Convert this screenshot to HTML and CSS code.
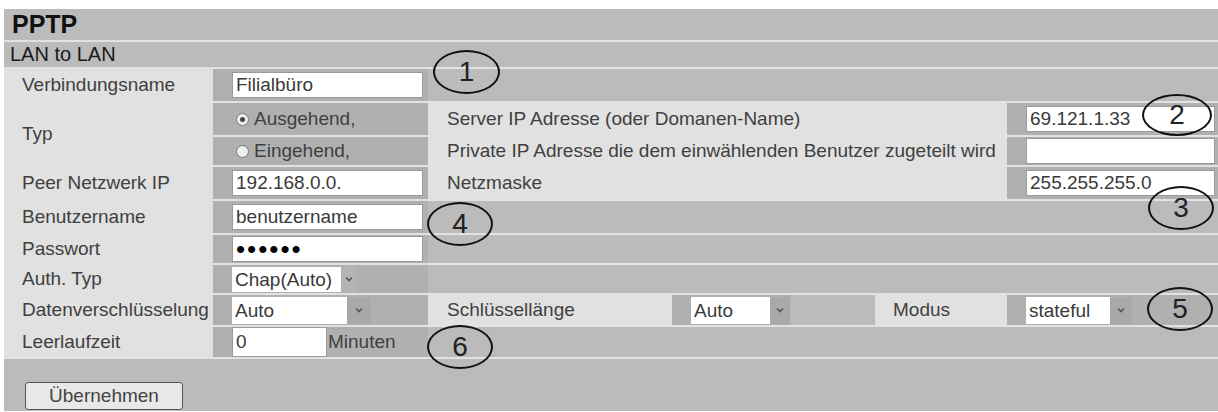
FILE: index.html
```html
<!DOCTYPE html>
<html lang="de">
  <head>
    <meta charset="UTF-8" />
    <meta name="viewport" content="width=device-width, initial-scale=1.0" />
    <title>PPTP LAN to LAN</title>
    <link rel="stylesheet" href="styles.css">
  </head>
  <body>
    <div class="page">
      <div class="panel">
        <div class="title">PPTP</div>
        <div class="subtitle">LAN to LAN</div>

        <div class="row tall">
          <div class="cell lbl col-a">Verbindungsname</div>
          <div class="cell val col-b"><input type="text" class="field" value="Filialbüro" /></div>
          <div class="cell rest"></div>
        </div>

        <div class="row group">
          <div class="cell lbl col-a">Typ</div>
          <div class="sub">
            <div class="subrow tall">
              <div class="cell val col-b">
                <label class="radio"><input type="radio" name="typ" checked />Ausgehend,</label>
              </div>
              <div class="cell lbl col-c">Server IP Adresse (oder Domanen-Name)</div>
              <div class="cell val col-d"><input type="text" class="field" value="69.121.1.33" /></div>
            </div>
            <div class="subrow short">
              <div class="cell val col-b">
                <label class="radio"><input type="radio" name="typ" />Eingehend,</label>
              </div>
              <div class="cell lbl col-c">Private IP Adresse die dem einwählenden Benutzer zugeteilt wird</div>
              <div class="cell val col-d"><input type="text" class="field" value="" /></div>
            </div>
          </div>
        </div>

        <div class="row tall">
          <div class="cell lbl col-a">Peer Netzwerk IP</div>
          <div class="cell val col-b"><input type="text" class="field" value="192.168.0.0." /></div>
          <div class="cell lbl col-c">Netzmaske</div>
          <div class="cell val col-d"><input type="text" class="field" value="255.255.255.0" /></div>
        </div>

        <div class="row tall">
          <div class="cell lbl col-a">Benutzername</div>
          <div class="cell val col-b"><input type="text" class="field" value="benutzername" /></div>
          <div class="cell rest"></div>
        </div>

        <div class="row short">
          <div class="cell lbl col-a">Passwort</div>
          <div class="cell val col-b"><input type="password" class="field pw" value="geheim" /></div>
          <div class="cell rest"></div>
        </div>

        <div class="row short">
          <div class="cell lbl col-a">Auth. Typ</div>
          <div class="cell val col-b">
            <span class="select sel-auth">
              <select><option>Chap(Auto)</option></select>
              <span class="arrow"><svg width="8" height="6" viewBox="0 0 8 6"><path d="M1 1.5 L4 4.5 L7 1.5" fill="none" stroke="#555" stroke-width="1.6"/></svg></span>
            </span>
          </div>
          <div class="cell rest"></div>
        </div>

        <div class="row">
          <div class="cell lbl col-a">Datenverschlüsselung</div>
          <div class="cell val col-b">
            <span class="select sel-data">
              <select><option>Auto</option></select>
              <span class="arrow"><svg width="8" height="6" viewBox="0 0 8 6"><path d="M1 1.5 L4 4.5 L7 1.5" fill="none" stroke="#555" stroke-width="1.6"/></svg></span>
            </span>
          </div>
          <div class="cell lbl col-key">Schlüssellänge</div>
          <div class="cell val col-keyval">
            <span class="select sel-key">
              <select><option>Auto</option></select>
              <span class="arrow"><svg width="8" height="6" viewBox="0 0 8 6"><path d="M1 1.5 L4 4.5 L7 1.5" fill="none" stroke="#555" stroke-width="1.6"/></svg></span>
            </span>
          </div>
          <div class="cell col-gap"></div>
          <div class="cell lbl col-mode">Modus</div>
          <div class="cell val col-d">
            <span class="select sel-mode">
              <select><option>stateful</option></select>
              <span class="arrow"><svg width="8" height="6" viewBox="0 0 8 6"><path d="M1 1.5 L4 4.5 L7 1.5" fill="none" stroke="#555" stroke-width="1.6"/></svg></span>
            </span>
          </div>
        </div>

        <div class="row">
          <div class="cell lbl col-a">Leerlaufzeit</div>
          <div class="cell val col-b"><input type="text" class="field idle" value="0" /><span class="unit">Minuten</span></div>
          <div class="cell rest"></div>
        </div>

        <div class="actions">
          <button type="button">Übernehmen</button>
        </div>
      </div>

      <!-- callout markers -->
      <div class="mark m1">1</div>
      <div class="mark m2">2</div>
      <div class="mark m3">3</div>
      <div class="mark m4">4</div>
      <div class="mark m5">5</div>
      <div class="mark m6">6</div>
    </div>
  </body>
</html>
```

FILE: styles.css
```css
body {
  background-color: #fff;
  color: #404040;
  font-family: "Liberation Sans", Arial, sans-serif;
  font-size: 19px;
  margin: 0;
  overflow: hidden;
}
.page {
  padding: 9px 0 0 4px;
  position: relative;
}
.panel {
  background-color: #bbbbbb;
  width: 1214px;
}
.title {
  border-bottom: 2px solid #e2e2e2;
  color: #111;
  font-size: 25px;
  font-weight: bold;
  height: 31px;
  line-height: 31px;
  padding-left: 8px;
}
.subtitle {
  border-bottom: 2px solid #e2e2e2;
  color: #1a1a1a;
  font-size: 20px;
  height: 25px;
  line-height: 25px;
  padding-left: 6px;
}
.row {
  border-bottom: 2px solid #e2e2e2;
  display: flex;
  height: 30px;
}
.row.tall,
.subrow.tall {
  height: 32px;
}
.row.short,
.subrow.short {
  height: 28px;
}
.row.group {
  height: 62px;
}
.sub {
  display: flex;
  flex-direction: column;
}
.subrow {
  display: flex;
}
.subrow.tall {
  border-bottom: 2px solid #e2e2e2;
}
.cell {
  align-items: center;
  box-sizing: border-box;
  display: flex;
  height: 100%;
  white-space: nowrap;
}
.lbl {
  background-color: #e1e1e1;
  padding-left: 19px;
}
.col-a {
  padding-left: 18px;
  width: 209px;
}
.col-b {
  width: 215px;
}
.col-c {
  width: 579px;
}
.col-d {
  width: 211px;
}
.col-key {
  width: 244px;
}
.col-keyval {
  padding-left: 18px;
  width: 118px;
}
.col-gap {
  width: 85px;
}
.col-mode {
  padding-left: 18px;
  width: 132px;
}
.rest {
  flex: 1;
}
.val {
  background-color: #b0b0b0;
  padding-left: 19px;
}
.field {
  background-color: #fff;
  border: 1px solid #9a9a9a;
  box-sizing: border-box;
  color: #3a3a3a;
  font-family: "Liberation Sans", Arial, sans-serif;
  font-size: 19px;
  height: 26px;
  padding: 0 3px;
  width: 191px;
}
.col-d .field {
  width: 189px;
}
.field.pw {
  color: #000;
  font-size: 26px;
  letter-spacing: 2px;
}
.field.idle {
  height: 30px;
  width: 95px;
}
.unit {
  margin-left: 1px;
}
.radio {
  align-items: center;
  display: flex;
  margin-left: 4px;
}
.radio input {
  -webkit-appearance: none;
  appearance: none;
  background-color: #eee;
  border: 1px solid #777;
  border-radius: 50%;
  box-sizing: border-box;
  height: 13px;
  margin: 0 5px 0 0;
  position: relative;
  width: 13px;
}
.radio input:checked::after {
  background-color: #444;
  border-radius: 50%;
  content: "";
  height: 5px;
  left: 3px;
  position: absolute;
  top: 3px;
  width: 5px;
}
.select {
  background-color: #fff;
  display: flex;
  height: 27px;
}
.select select {
  -webkit-appearance: none;
  appearance: none;
  background: transparent;
  border: none;
  color: #3a3a3a;
  flex: 1;
  font-family: "Liberation Sans", Arial, sans-serif;
  font-size: 19px;
  min-width: 0;
  outline: none;
  padding: 0 0 0 3px;
}
.select .arrow {
  align-items: center;
  background-color: #a9a9a9;
  display: flex;
  justify-content: center;
}
.sel-auth {
  height: 25px;
  width: 124px;
}
.sel-auth .arrow {
  background-color: #b4b4b4;
  width: 15px;
}
.sel-data {
  width: 139px;
}
.sel-data .arrow {
  width: 24px;
}
.sel-key {
  width: 100px;
}
.sel-key .arrow {
  width: 20px;
}
.sel-mode {
  width: 106px;
}
.sel-mode .arrow {
  width: 22px;
}
.actions {
  box-sizing: border-box;
  height: 52px;
  padding: 23px 0 0 21px;
}
.actions button {
  background-color: #e8e8e8;
  border: 1px solid #555;
  border-radius: 3px;
  color: #444;
  font-family: "Liberation Sans", Arial, sans-serif;
  font-size: 19px;
  height: 28px;
  width: 158px;
}
.mark {
  border: 2px solid #111;
  border-radius: 50%;
  box-sizing: border-box;
  color: #222;
  font-size: 28px;
  height: 44px;
  line-height: 40px;
  position: absolute;
  text-align: center;
  width: 66px;
}
.m1 { left: 433px; top: 50px; width: 67px; }
.m2 { left: 1142px; top: 94px; width: 70px; height: 42px; line-height: 38px; }
.m3 { left: 1148px; top: 186px; }
.m4 { left: 427px; top: 202px; }
.m5 { left: 1147px; top: 287px; }
.m6 { left: 427px; top: 325px; }
```
